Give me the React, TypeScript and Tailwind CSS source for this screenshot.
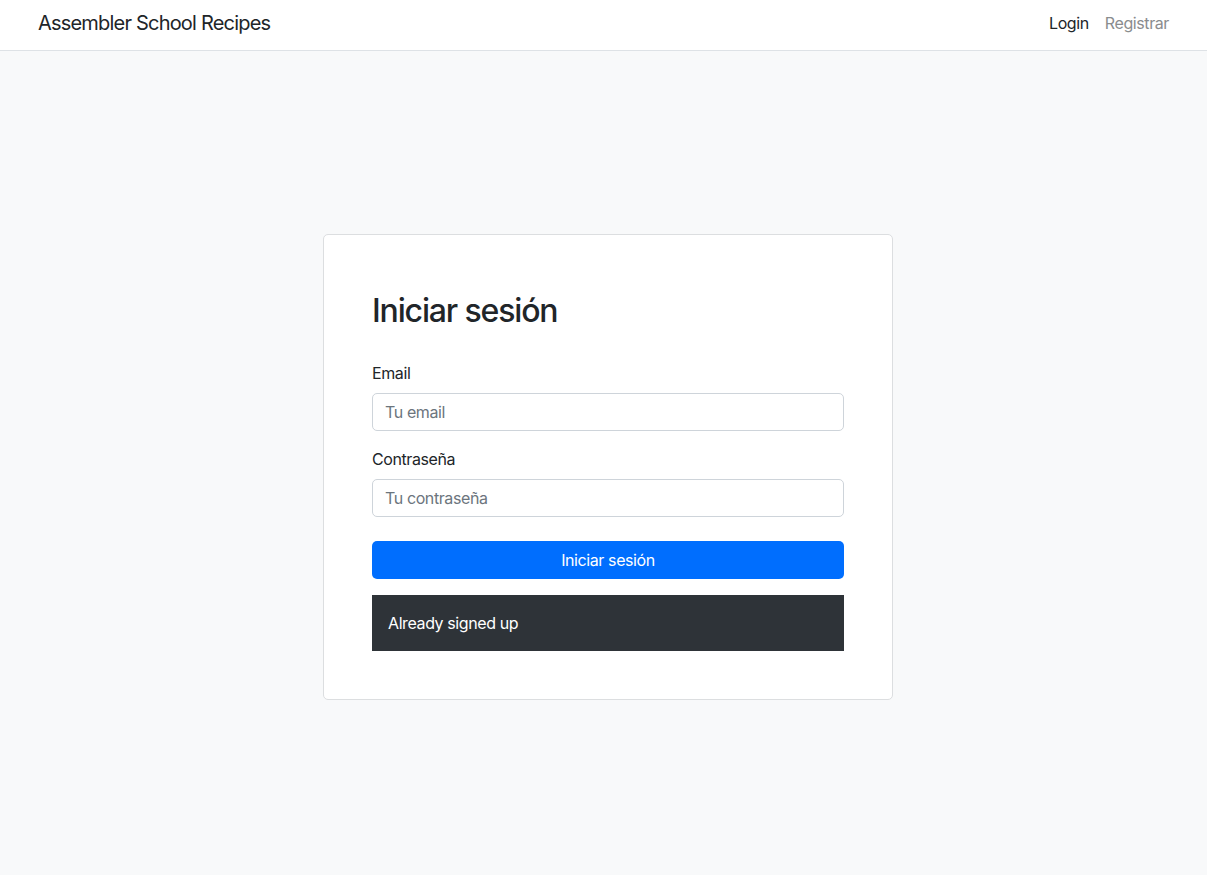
import React from 'react';

const font = { fontFamily: 'Inter, "Liberation Sans", Arial, sans-serif' };

export default function App() {
  return (
    <div className="min-h-screen bg-[#f8f9fa] text-[#212529] tracking-[-0.025em]" style={font}>
      <nav className="h-[51px] bg-white border-b border-[#dee2e6] flex items-center justify-between px-[38px] pb-[4px]">
        <a className="text-[20px] leading-[30px] text-[#212529] tracking-[-0.04em]">Assembler School Recipes</a>
        <div className="flex items-center gap-4 text-[16px]">
          <a className="text-[#212529]">Login</a>
          <a className="text-[#8a8c8e]">Registrar</a>
        </div>
      </nav>

      <main className="flex justify-center pt-[183px] pl-[9px]">
        <div className="w-[570px] bg-white border border-[#dcdee0] rounded-[5px] px-12 pt-[57px] pb-12">
          <h2 className="text-[32px] leading-[38px] font-medium tracking-[-0.036em] mb-[31px]">Iniciar sesión</h2>
          <form className="flex flex-col">
            <label className="text-[16px] leading-6 mb-2">Email</label>
            <input
              type="email"
              placeholder="Tu email"
              className="h-[38px] border border-[#ced4da] rounded-[5px] px-3 text-[16px] tracking-[-0.025em] placeholder-[#6c757d] outline-none mb-4"
            />
            <label className="text-[16px] leading-6 mb-2">Contraseña</label>
            <input
              type="password"
              placeholder="Tu contraseña"
              className="h-[38px] border border-[#ced4da] rounded-[5px] px-3 text-[16px] tracking-[-0.025em] placeholder-[#6c757d] outline-none mb-6"
            />
            <button
              type="button"
              className="h-[38px] bg-[#006efe] text-white rounded-[5px] text-[16px] mb-4"
            >
              Iniciar sesión
            </button>
            <div className="bg-[#2e3338] text-white px-4 py-4 text-[16px] leading-6">Already signed up</div>
          </form>
        </div>
      </main>
    </div>
  );
}
